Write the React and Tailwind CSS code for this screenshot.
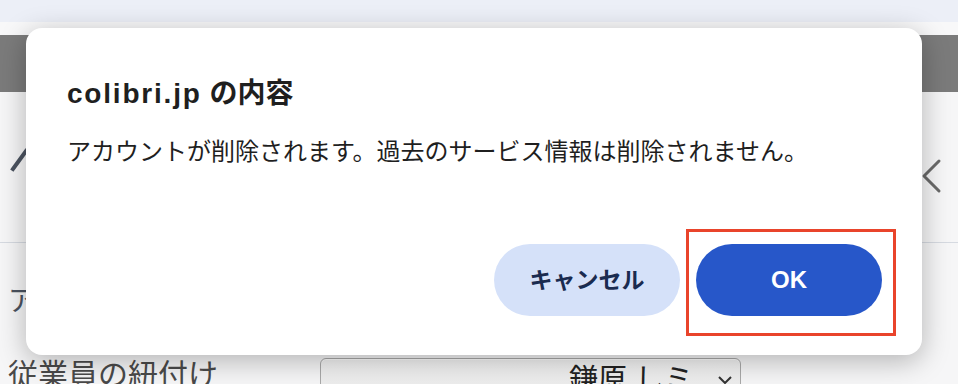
const jp = { fontFamily: '"Liberation Sans", "Noto Sans CJK JP", sans-serif' }

function Page() {
  return (
    <div className="flex h-[384px] w-[958px] flex-col overflow-hidden bg-[#f6f6f7]" style={jp}>
      <div className="h-[22px] shrink-0 bg-[#eceff7]" />
      <div className="h-[13px] shrink-0 bg-[#f8f8f9]" />
      <div className="h-[57px] shrink-0 bg-[#7b7b7b]" />
      <div className="flex h-[151px] shrink-0 items-center justify-between border-b border-[#d6dae1] pl-[10px] pr-[16px]">
        <svg width="18" height="26" viewBox="0 0 18 26" className="-mt-[16px]">
          <path d="M3 23 L16 5" stroke="#4b5360" strokeWidth="4" strokeLinecap="square" fill="none" />
        </svg>
        <svg width="22" height="36" viewBox="0 0 22 36" className="mt-[18px]">
          <path d="M19 3 L4 18 L19 33" stroke="#6a6a6a" strokeWidth="3" strokeLinecap="round" strokeLinejoin="round" fill="none" />
        </svg>
      </div>
      <div className="flex h-[111px] shrink-0 items-start pl-[8px] pt-[45px] text-[28px] leading-none text-[#4b5360]">
        <span>アカウント</span>
      </div>
      <div className="flex items-start pl-[8px]">
        <span className="mt-[6px] w-[312px] shrink-0 text-[30px] leading-none text-[#4a4a4a]">従業員の紐付け</span>
        <div className="mt-[4px] flex h-[44px] w-[421px] items-start justify-end gap-[24px] rounded-[6px] border border-[#a9a9a9] bg-gradient-to-b from-[#f4f4f4] to-[#e8e8e8] pr-[7px] pt-[7px] shadow-[inset_0_1px_0_#fff]">
          <span className="text-[29px] leading-none text-[#222]">鎌原 しミ</span>
          <svg width="16" height="10" viewBox="0 0 16 10" className="mt-[9px]">
            <path d="M2 2 L8 8 L14 2" stroke="#333" strokeWidth="2" fill="none" />
          </svg>
        </div>
      </div>
    </div>
  )
}

function Dialog() {
  return (
    <div
      className="absolute left-[26px] top-[28px] flex h-[327px] w-[896px] flex-col rounded-[16px] bg-white pl-[41px] pr-[40px] pt-[49px] pb-[39px] shadow-[0_6px_28px_rgba(0,0,0,0.28)]"
      style={jp}
    >
      <h2 className="text-[28px] font-bold leading-[34px] text-[#1f1f1f]">
        <span className="tracking-[1.8px]">colibri.jp</span> の内容
      </h2>
      <p className="mt-[25px] text-[24px] leading-[32px] text-[#1f1f1f]">
        アカウントが削除されます。過去のサービス情報は削除されません。
      </p>
      <div className="flex-1" />
      <div className="relative flex justify-end gap-[16px]">
        <button className="h-[72px] w-[186px] rounded-full bg-[#d5e1f9] text-[23px] font-bold text-[#1a2b50]">
          キャンセル
        </button>
        <button className="h-[72px] w-[186px] rounded-full bg-[#2757c9] text-[24px] font-bold text-white">
          OK
        </button>
        <div className="pointer-events-none absolute right-[-14px] top-[-15px] h-[107px] w-[210px] border-[3px] border-[#e9442b]" />
      </div>
    </div>
  )
}

export default function App() {
  return (
    <div className="relative h-[384px] w-[958px] overflow-hidden">
      <Page />
      <Dialog />
    </div>
  )
}
